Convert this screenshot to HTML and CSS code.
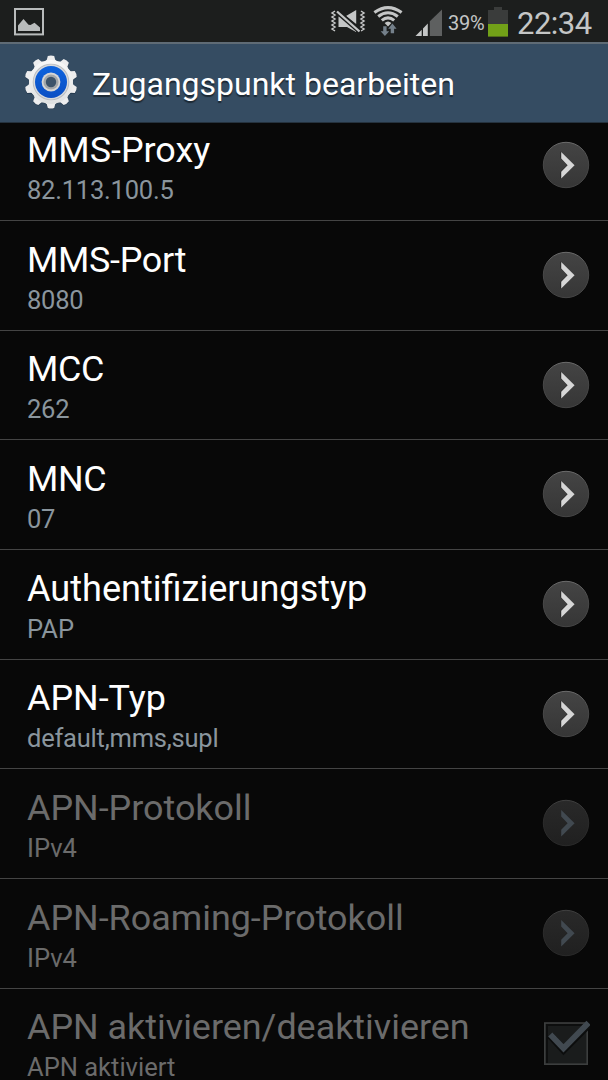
FILE: index.html
```html
<!DOCTYPE html>
<html lang="de">
<head>
    <meta charset="UTF-8">
    <meta name="viewport" content="width=device-width, initial-scale=1.0">
    <title>Zugangspunkt bearbeiten</title>
    <link rel="stylesheet" href="styles.css">
</head>
<body>

    <!-- Shared shapes -->
    <svg class="sprites" width="0" height="0">
        <defs>
            <linearGradient id="disc" x1="0" y1="0" x2="0" y2="1">
                <stop offset="0" stop-color="#444"/>
                <stop offset="1" stop-color="#363636"/>
            </linearGradient>
            <linearGradient id="rim" x1="0" y1="0" x2="0" y2="1">
                <stop offset="0" stop-color="#6c6c6c"/>
                <stop offset="0.35" stop-color="#484848"/>
                <stop offset="1" stop-color="#454545"/>
            </linearGradient>
            <linearGradient id="disc-off" x1="0" y1="0" x2="0" y2="1">
                <stop offset="0" stop-color="#292929"/>
                <stop offset="1" stop-color="#202020"/>
            </linearGradient>
            <linearGradient id="rim-off" x1="0" y1="0" x2="0" y2="1">
                <stop offset="0" stop-color="#404040"/>
                <stop offset="0.35" stop-color="#2b2b2b"/>
                <stop offset="1" stop-color="#292929"/>
            </linearGradient>
        </defs>
        <symbol id="arrow" viewBox="0 0 48 48">
            <circle cx="24" cy="24" r="22.7" fill="url(#disc)" stroke="url(#rim)"/>
            <path d="M18.5 10.4 32 24 18.5 37.6V30.8L25.3 24 18.5 17.2Z" fill="#1c1c1c"/>
            <path d="M19.2 10.9 32.6 24.2 19.2 37.4V30.8L25.6 24.2 19.2 17.6Z" fill="#d6d6d6"/>
        </symbol>
        <symbol id="arrow-off" viewBox="0 0 48 48">
            <circle cx="24" cy="24" r="22.7" fill="url(#disc-off)" stroke="url(#rim-off)"/>
            <path d="M19.2 10.9 32.6 24.2 19.2 37.4V30.8L25.6 24.2 19.2 17.6Z" fill="#414950"/>
        </symbol>
    </svg>

    <div class="status-bar">
        <svg class="picture-icon" width="30" height="28" viewBox="0 0 30 28">
            <rect x="1" y="1" width="28" height="25.4" fill="none" stroke="#b9bcbc" stroke-width="2"/>
            <path d="M4 23V17.5L9.5 11 14.5 16.8 16.5 17 20.5 14.8 26 19.5V23Z" fill="#b9bcbc"/>
        </svg>
        <div class="status-icons">
            <!-- Sound off, vibrate -->
            <svg class="vibrate" width="36" height="26" viewBox="330 9 36 26">
                <path d="M335 11 332 13 335 15 332 17 335 19 332 21 335 23 332 25 335 27 332 29 335 31 M361 11 364 13 361 15 364 17 361 19 364 21 361 23 364 25 361 27 364 29 361 31" fill="none" stroke="#c4c6c6" stroke-width="1.5"/>
                <path d="M338.5 16.5H342L356 27V32L347 27H338.5Z M346 16 356.2 10V24Z" fill="#c4c6c6"/>
                <path d="M337 11.5 360 31.5" stroke="#1c1e1d" stroke-width="5"/>
                <path d="M337 11.5 359.5 31.5" stroke="#c4c6c6" stroke-width="2.3"/>
            </svg>
            <!-- Wi-Fi with traffic arrows -->
            <svg class="wifi" width="32" height="34" viewBox="372 4 32 34">
                <g fill="none" stroke="#c4c6c6" stroke-width="3.1">
                    <path d="M374.4 12.4Q388 2.7 401.6 12.4"/>
                    <path d="M378.2 16.5Q388 9 397.8 16.5"/>
                    <path d="M381.8 20.4Q388 15.2 394.2 20.4"/>
                </g>
                <path d="M384.6 23Q388 19.8 391.4 23L388 26.4Z" fill="#c4c6c6"/>
                <path d="M383.2 26.3H386.6V31.2H389.2L384.9 36 380.6 31.2H383.2Z M390.7 33.2V28.7H388.2L392.4 23.6 396.6 28.7H394.1V33.2Z" fill="#74808a" stroke="#1c1e1d" stroke-width="1" paint-order="stroke"/>
            </svg>
            <!-- Signal strength -->
            <svg class="signal" width="28" height="28" viewBox="415 9 28 28">
                <path d="M415.5 36 421.7 29.7V36Z M423 36V28.5L427.8 23.5V36Z" fill="#c4c6c6"/>
                <path d="M429.8 36V21.2L442 9.6V36Z" fill="#5e6060"/>
            </svg>
            <span class="battery-text">39%</span>
            <svg class="battery" width="20" height="30" viewBox="0 0 20 30">
                <path d="M0 3H6V0H14V3H20V17H0Z" fill="#3a3c3b"/>
                <rect y="17" width="20" height="12.6" fill="#72a118"/>
            </svg>
            <span class="clock">22:34</span>
        </div>
    </div>

    <header class="title-bar">
        <svg class="gear" width="54" height="54" viewBox="-27 -27 54 54">
            <defs>
                <linearGradient id="metal" x1="0" y1="0" x2="0" y2="1">
                    <stop offset="0" stop-color="#f8f8f8"/>
                    <stop offset="1" stop-color="#dfe1e2"/>
                </linearGradient>
                <linearGradient id="ring" x1="0" y1="0" x2="0" y2="1">
                    <stop offset="0" stop-color="#0d63de"/>
                    <stop offset="1" stop-color="#0b4fc4"/>
                </linearGradient>
                <path id="tooth" d="M-7 -20 -4.2 -22.2 -3.2 -26Q0 -27.2 3.2 -26L4.2 -22.2 7 -20Z"/>
                <g id="teeth">
                    <use href="#tooth"/>
                    <use href="#tooth" transform="rotate(36)"/>
                    <use href="#tooth" transform="rotate(72)"/>
                    <use href="#tooth" transform="rotate(108)"/>
                    <use href="#tooth" transform="rotate(144)"/>
                    <use href="#tooth" transform="rotate(180)"/>
                    <use href="#tooth" transform="rotate(216)"/>
                    <use href="#tooth" transform="rotate(252)"/>
                    <use href="#tooth" transform="rotate(288)"/>
                    <use href="#tooth" transform="rotate(324)"/>
                </g>
            </defs>
            <use href="#teeth" y="0.8" fill="#24394d"/>
            <use href="#teeth" fill="#ededee"/>
            <circle r="22" fill="url(#metal)"/>
            <circle r="18.3" fill="#b9bcc0"/>
            <circle r="17.4" fill="#d7d9dc"/>
            <circle r="16" fill="url(#ring)"/>
            <circle r="9.4" fill="#d6d6d6"/>
            <circle r="7.6" fill="#a3a7aa"/>
            <circle r="5.2" fill="#3d536a"/>
        </svg>
        <h1>Zugangspunkt bearbeiten</h1>
    </header>

    <ul class="settings">
        <li class="row row-first">
            <div class="label"><h2>MMS-Proxy</h2><p class="digits">82.113.100.5</p></div>
            <svg class="more"><use href="#arrow"/></svg>
        </li>
        <li class="row">
            <div class="label"><h2 class="caps">MMS-Port</h2><p class="digits">8080</p></div>
            <svg class="more"><use href="#arrow"/></svg>
        </li>
        <li class="row">
            <div class="label"><h2 class="caps">MCC</h2><p class="digits">262</p></div>
            <svg class="more"><use href="#arrow"/></svg>
        </li>
        <li class="row">
            <div class="label"><h2 class="caps">MNC</h2><p class="digits">07</p></div>
            <svg class="more"><use href="#arrow"/></svg>
        </li>
        <li class="row">
            <div class="label"><h2 class="long">Authentifizierungstyp</h2><p>PAP</p></div>
            <svg class="more"><use href="#arrow"/></svg>
        </li>
        <li class="row">
            <div class="label"><h2>APN-Typ</h2><p class="digits">default,mms,supl</p></div>
            <svg class="more"><use href="#arrow"/></svg>
        </li>
        <li class="row disabled">
            <div class="label"><h2>APN-Protokoll</h2><p>IPv4</p></div>
            <svg class="more"><use href="#arrow-off"/></svg>
        </li>
        <li class="row disabled">
            <div class="label"><h2>APN-Roaming-Protokoll</h2><p>IPv4</p></div>
            <svg class="more"><use href="#arrow-off"/></svg>
        </li>
        <li class="row disabled">
            <div class="label"><h2>APN aktivieren/deaktivieren</h2><p>APN aktiviert</p></div>
            <svg class="more" viewBox="542 1018 48 48">
                <rect x="544.8" y="1022" width="42.4" height="41.2" fill="#1a1c1c" stroke="#3c3e3e" stroke-width="1.6"/>
                <path d="M547 1062V1024H586" fill="none" stroke="#0d0e0e" stroke-width="2"/>
                <path d="M550.3 1034.5 563.5 1048.8 588.5 1023.6" fill="none" stroke="#0c0d0d" stroke-width="7.5"/>
                <path d="M550.3 1033.5 563.5 1047.3 588.5 1021.8" fill="none" stroke="#414950" stroke-width="5.8"/>
            </svg>
        </li>
    </ul>

</body>
</html>
```
FILE: styles.css
```css
* {
    box-sizing: border-box;
}

body {
    margin: 0;
    height: 1080px;
    overflow: hidden;
    background-color: #080808;
    color: #fff;
    font-family: Roboto, sans-serif;
    display: flex;
    flex-direction: column;
}

h1, h2, p, ul {
    margin: 0;
    padding: 0;
    font-weight: 400;
    white-space: nowrap;
}

.sprites {
    flex-shrink: 0;
}

/* Status bar */
.status-bar {
    height: 42px;
    flex-shrink: 0;
    display: flex;
    justify-content: space-between;
    align-items: flex-start;
    padding: 0 16px 0 14px;
    background: #1c1e1d;
    color: #c4c6c6;
}

.picture-icon {
    margin-top: 8px;
}

.status-icons {
    display: flex;
    align-items: flex-start;
}

.vibrate {
    margin: 9px 6px 0 0;
}

.wifi {
    margin: 4px 11px 0 0;
}

.signal {
    margin: 9px 5px 0 0;
}

.battery-text {
    width: 36px;
    margin: 11px 4px 0 0;
    font-size: 20px;
    line-height: 24px;
    letter-spacing: -0.2px;
}

.battery {
    margin: 7px 9px 0 0;
}

.clock {
    width: 75px;
    margin-top: 6px;
    font-size: 31px;
    line-height: 36px;
    letter-spacing: -0.5px;
}

/* Title bar */
.title-bar {
    height: 81px;
    flex-shrink: 0;
    display: flex;
    align-items: center;
    gap: 14px;
    padding-left: 24px;
    background: #354c62;
    border-top: 2px solid #5f6b75;
    border-bottom: 1px solid #25323e;
}

.gear {
    margin-top: -2px;
}

h1 {
    margin-top: 1px;
    font-size: 32px;
    line-height: 38px;
    text-shadow: 0 2px 1px #1c2833;
}

/* Settings list */
.settings {
    list-style: none;
}

.row {
    height: 109.7px;
    display: flex;
    justify-content: space-between;
    align-items: flex-start;
    padding: 17px 18px 0 27px;
    border-bottom: 1px solid #444;
}

.row-first {
    height: 98px;
    padding-top: 5.3px;
}

.label {
    padding-top: 0.5px;
}

.row h2 {
    font-size: 35.9px;
    line-height: 42px;
}

.row h2.caps {
    letter-spacing: -0.3px;
}

.row h2.long {
    font-size: 36.1px;
}

.row p {
    font-size: 25.5px;
    line-height: 24px;
    margin-top: 7px;
    color: #8a959d;
}

.row p.digits {
    letter-spacing: -0.22px;
}

.more {
    width: 48px;
    height: 48px;
    margin-top: 13px;
}

.disabled h2,
.disabled p {
    color: #6b6b6b;
}
```
